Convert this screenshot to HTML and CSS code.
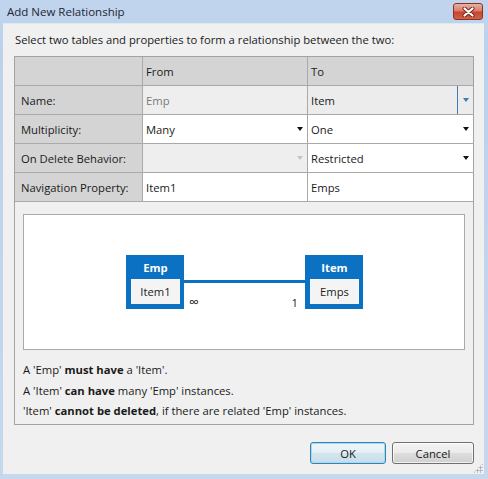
FILE: index.html
```html
<!DOCTYPE html>
<html lang="en">
<head>
  <meta charset="UTF-8">
  <meta name="viewport" content="width=device-width, initial-scale=1.0">
  <title>Add New Relationship</title>
  <link rel="stylesheet" href="styles.css">
</head>
<body>
  <div class="window">
    <div class="titlebar">
      <span class="title">Add New Relationship</span>
      <button class="close" title="Close">
        <svg width="13" height="10" viewBox="0 0 13 10">
          <path d="M2.5 1.5 L10.5 8.5 M10.5 1.5 L2.5 8.5" stroke="#6b2418" stroke-width="4" stroke-linecap="round"/>
          <path d="M2.5 1.5 L10.5 8.5 M10.5 1.5 L2.5 8.5" stroke="#ffffff" stroke-width="2.2" stroke-linecap="round"/>
        </svg>
      </button>
    </div>

    <div class="client">
      <p class="intro">Select two tables and properties to form a relationship between the two:</p>

      <div class="panel">
        <!-- property grid -->
        <div class="grid">
          <div class="cell head"></div>
          <div class="cell head">From</div>
          <div class="cell head">To</div>

          <div class="cell label">Name:</div>
          <div class="cell disabled muted">Emp</div>
          <div class="cell combo focused">Item<span class="drop-btn"><span class="arrow blue"></span></span></div>

          <div class="cell label">Multiplicity:</div>
          <div class="cell combo">Many<span class="arrow"></span></div>
          <div class="cell combo">One<span class="arrow"></span></div>

          <div class="cell label">On Delete Behavior:</div>
          <div class="cell combo disabled"><span class="arrow light"></span></div>
          <div class="cell combo">Restricted<span class="arrow"></span></div>

          <div class="cell label">Navigation Property:</div>
          <div class="cell">Item1</div>
          <div class="cell">Emps</div>
        </div>

        <!-- relationship preview -->
        <div class="diagram">
          <div class="entity">
            <div class="entity-name">Emp</div>
            <div class="entity-prop">Item1</div>
          </div>
          <div class="link">
            <div class="link-line"></div>
            <div class="link-ends">
              <span class="many">&infin;</span>
              <span>1</span>
            </div>
          </div>
          <div class="entity">
            <div class="entity-name">Item</div>
            <div class="entity-prop">Emps</div>
          </div>
        </div>

        <ul class="notes">
          <li>A 'Emp' <b>must have</b> a 'Item'.</li>
          <li>A 'Item' <b>can have</b> many 'Emp' instances.</li>
          <li>'Item' <b>cannot be deleted</b>, if there are related 'Emp' instances.</li>
        </ul>
      </div>

      <div class="buttons">
        <button class="btn default">OK</button>
        <button class="btn cancel">Cancel</button>
      </div>

      <div class="grip"></div>
    </div>
  </div>
</body>
</html>
```

FILE: styles.css
```css
/* dialog frame */
* {
  box-sizing: border-box;
}

body {
  margin: 0;
  font-family: 'Segoe UI', 'Open Sans', sans-serif;
  font-size: 11.25px;
  color: #1a1a1a;
}

.window {
  width: 488px;
  height: 479px;
  display: flex;
  flex-direction: column;
  background: linear-gradient(to bottom, #c1d5ee, #bcd1eb 10%, #c6d8ee);
}

.titlebar {
  height: 23px;
  display: flex;
  align-items: flex-start;
  padding-left: 7px;
}

.title {
  line-height: 24px;
  font-size: 11.5px;
  color: #1e2633;
}

.close {
  margin: 3px 5px 0 auto;
  width: 30px;
  height: 17px;
  padding: 0;
  border: 1px solid #8a3324;
  border-radius: 3px;
  background: linear-gradient(to bottom, #eab1a4, #dc7c68 45%, #c7452e 55%, #d0634a);
  display: flex;
  align-items: center;
  justify-content: center;
}

.client {
  position: relative;
  flex: 1;
  margin: 0 4px 5px 3px;
  padding: 0 10px 0 11px;
  background: #f0f0f0;
  border-top: 1px solid #dfe7f1;
}

.intro {
  margin: 8px 0 8px 1px;
  line-height: 16px;
}

/* grid + preview box */
.panel {
  height: 369px;
  border: 1px solid #a3a3a3;
  background: #f0f0f0;
}

.grid {
  display: grid;
  grid-template-columns: 128px 165px 1fr;
  grid-auto-rows: 29px;
}

.cell {
  display: flex;
  align-items: center;
  padding-left: 3px;
  background: #ffffff;
  border-right: 1px solid #a9a9a9;
  border-bottom: 1px solid #a9a9a9;
  white-space: nowrap;
}

.cell:nth-child(3n) {
  border-right: none;
}

.head,
.label {
  background: #d4d4d4;
}

.label {
  padding-left: 6px;
}

.disabled {
  background: #eeeeee;
}

.muted {
  color: #7a7a7a;
}

.focused {
  background: #ececec;
}

.arrow {
  margin-left: auto;
  margin-right: 4px;
  width: 0;
  height: 0;
  border-left: 3.5px solid transparent;
  border-right: 3.5px solid transparent;
  border-top: 4px solid #111111;
}

.arrow.light {
  border-top-color: #c4c4c4;
}

.arrow.blue {
  margin: 0;
  border-top-color: #3a7cb8;
}

.drop-btn {
  margin-left: auto;
  width: 16px;
  align-self: stretch;
  border-left: 1px solid #3a7cb8;
  display: flex;
  align-items: center;
  justify-content: center;
}

/* relationship preview */
.diagram {
  height: 136px;
  margin: 12px 8px 0;
  border: 1px solid #aaaaaa;
  background: #ffffff;
  display: flex;
  align-items: center;
  justify-content: center;
  padding-left: 1px;
}

.entity {
  width: 58px;
  height: 54px;
  padding: 0 4px 5px 5px;
  background: #0b71c3;
  display: flex;
  flex-direction: column;
}

.entity-name {
  height: 24px;
  line-height: 25px;
  text-align: center;
  font-weight: bold;
  color: #ffffff;
}

.entity-prop {
  flex: 1;
  background: #f4f4f4;
  text-align: center;
  line-height: 25px;
  color: #222222;
}

.link {
  width: 121px;
  height: 54px;
}

.link-line {
  margin-top: 25px;
  height: 3px;
  background: #0b71c3;
}

.link-ends {
  display: flex;
  justify-content: space-between;
  align-items: baseline;
  margin-top: 11px;
  padding: 0 7px 0 5px;
  line-height: 16px;
  color: #222222;
}

.many {
  font-size: 14px;
}

.notes {
  list-style: none;
  margin: 10px 0 0;
  padding: 0 0 0 8px;
}

.notes li {
  line-height: 20.5px;
}

.notes b {
  font-weight: bold;
}

/* dialog buttons */
.buttons {
  display: flex;
  justify-content: flex-end;
  gap: 6px;
  margin-top: 17px;
}

.btn {
  height: 22px;
  padding: 0;
  font-family: inherit;
  font-size: 11.25px;
  color: #1a1a1a;
  border: 1px solid #707070;
  border-radius: 3px;
  background: linear-gradient(to bottom, #f3f3f3, #ebebeb 48%, #dddddd 52%, #d0d0d0);
  box-shadow: inset 0 0 0 1px rgba(255, 255, 255, 0.7);
}

.btn.default {
  width: 76px;
  border-color: #3c7fb1;
  box-shadow: inset 0 0 0 1px #9fdcf5;
  background: linear-gradient(to bottom, #eef6fa, #e4eff5 48%, #d4e5ee 52%, #c9dde8);
}

.btn.cancel {
  width: 82px;
}

.grip {
  position: absolute;
  right: 1px;
  bottom: 1px;
  width: 10px;
  height: 10px;
  background: radial-gradient(circle, #9aa3ae 0.8px, transparent 1.3px) 0 0 / 3px 3px;
  clip-path: polygon(100% 0, 100% 100%, 0 100%);
}
```
